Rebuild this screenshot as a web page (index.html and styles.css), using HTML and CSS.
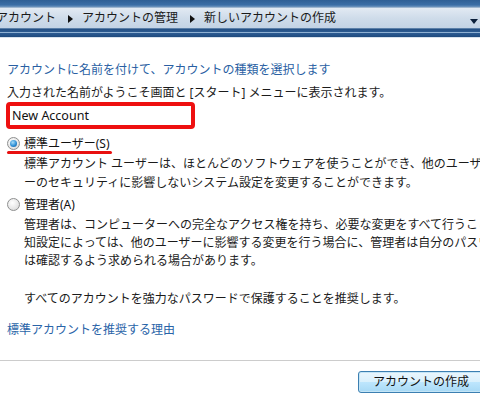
FILE: index.html
```html
<!DOCTYPE html>
<html lang="ja">
<head>
<meta charset="utf-8">
<title>新しいアカウントの作成</title>
<link rel="stylesheet" href="styles.css">
</head>
<body>
<div class="chrome">
  <div class="band-top"></div>
  <div class="addr">
    <span class="crumb first">アカウント</span>
    <svg class="sep" width="5" height="8" viewBox="0 0 5 8"><path d="M0 0 L5 4 L0 8 Z" fill="#111"/></svg>
    <span class="crumb">アカウントの管理</span>
    <svg class="sep" width="5" height="8" viewBox="0 0 5 8"><path d="M0 0 L5 4 L0 8 Z" fill="#111"/></svg>
    <span class="crumb">新しいアカウントの作成</span>
    <svg class="drop" width="8" height="5" viewBox="0 0 8 5"><path d="M0 0 L8 0 L4 5 Z" fill="#0b1f3a"/></svg>
  </div>
  <div class="band-bottom"></div>
</div>

<div class="content">
  <div class="instruction">アカウントに名前を付けて、アカウントの種類を選択します</div>
  <div class="para">入力された名前がようこそ画面と [スタート] メニューに表示されます。</div>
  <div class="namebox">New Account</div>

  <div class="option first-opt">
    <span class="radio checked"></span>
    <span class="label">標準ユーザー(S)</span>
    <span class="mark"></span>
  </div>
  <div class="desc">
    <div>標準アカウント ユーザーは、ほとんどのソフトウェアを使うことができ、他のユーザーや</div>
    <div>ーのセキュリティに影響しないシステム設定を変更することができます。</div>
  </div>

  <div class="option second-opt">
    <span class="radio"></span>
    <span class="label">管理者(A)</span>
  </div>
  <div class="desc tight">
    <div>管理者は、コンピューターへの完全なアクセス権を持ち、必要な変更をすべて行うことができます。</div>
    <div>知設定によっては、他のユーザーに影響する変更を行う場合に、管理者は自分のパスワード</div>
    <div>は確認するよう求められる場合があります。</div>
    <div class="gap">すべてのアカウントを強力なパスワードで保護することを推奨します。</div>
  </div>

  <div class="link">標準アカウントを推奨する理由</div>
</div>

<div class="footer">
  <div class="button">アカウントの作成</div>
</div>
</body>
</html>
```

FILE: styles.css
```css
html, body {
  margin: 0;
  padding: 0;
  background: #ffffff;
}
body {
  width: 480px;
  height: 399px;
  overflow: hidden;
  font-family: "Noto Sans", "Noto Sans CJK JP", sans-serif;
  font-size: 12px;
  color: #1b1b1b;
  white-space: nowrap;
}

.chrome {
  display: flex;
  flex-direction: column;
}
.band-top {
  height: 7px;
  background: linear-gradient(to bottom, #2f5f95, #3b6ea6 70%, #6f96bf);
}
.addr {
  display: flex;
  align-items: center;
  background: linear-gradient(to bottom, #e2eaf3, #cfdcea 50%, #c3d3e5);
  border-top: 1px solid #9fb6cf;
  border-bottom: 1px solid #5b7fa8;
  box-sizing: border-box;
  height: 22px;
  line-height: 1;
}
.crumb {
  color: #1a1a1a;
}
.crumb.first {
  margin-left: -4px;
}
.sep {
  margin: 1px 9px 0 12px;
}
.drop {
  margin-left: auto;
  margin-right: 2px;
  margin-top: 6px;
}
.band-bottom {
  height: 8px;
  background: linear-gradient(to bottom, #244f83 0, #2c5a90 35%, #8fb0d2 35%, #8fb0d2 55%, #2b5a91 55%, #1f4a7e 100%);
  border-bottom: 1px solid #d9e2ec;
}

.content {
  padding-left: 7px;
}
.instruction {
  margin-top: 22px;
  line-height: 19px;
  color: #2a5fa3;
}
.para {
  margin-top: 4px;
  line-height: 19px;
}
.namebox {
  margin-left: -1px;
  width: 189px;
  height: 27px;
  box-sizing: border-box;
  border: 4px solid #ee1010;
  border-radius: 4px;
  padding-left: 2px;
  line-height: 19px;
  background: #fff;
  color: #111;
  font-size: 12.5px;
}

.option {
  position: relative;
  display: flex;
  align-items: center;
  line-height: 19px;
}
.first-opt {
  margin-top: 5px;
}
.second-opt {
  margin-top: 3px;
}
.radio {
  width: 11px;
  height: 11px;
  border-radius: 50%;
  border: 1px solid #8e8f8f;
  background: radial-gradient(circle at 40% 35%, #ffffff, #e6e6e6 60%, #cfcfcf);
  margin-right: 4px;
  position: relative;
  flex: none;
}
.radio.checked::after {
  content: "";
  position: absolute;
  left: 2px;
  top: 2px;
  width: 7px;
  height: 7px;
  border-radius: 50%;
  background: radial-gradient(circle at 40% 35%, #a8dcf8, #2d8fd6 55%, #13518c);
}
.label {
  color: #111;
}
.mark {
  position: absolute;
  left: 0;
  top: 17px;
  width: 105px;
  height: 3px;
  border-radius: 2px;
  background: #e81010;
}

.desc {
  padding-left: 17px;
  margin-top: 1px;
  line-height: 19px;
}
.desc.tight {
  margin-top: 2px;
  line-height: 18px;
}
.desc .gap {
  margin-top: 20px;
}

.link {
  margin-top: 12px;
  line-height: 19px;
  color: #2a64a8;
}

.footer {
  margin-top: 21px;
  border-top: 1px solid #cccccc;
  display: flex;
  justify-content: flex-end;
  padding-top: 10px;
}
.button {
  width: 126px;
  height: 22px;
  box-sizing: border-box;
  margin-right: -4px;
  border: 1px solid #3c7fb1;
  border-radius: 3px;
  background: linear-gradient(to bottom, #eaf6fd 0, #d9f0fc 50%, #bee6fd 50%, #a7d9f5 100%);
  box-shadow: inset 0 0 0 1px #c4e5f6;
  text-align: center;
  line-height: 20px;
  color: #111;
}
```
